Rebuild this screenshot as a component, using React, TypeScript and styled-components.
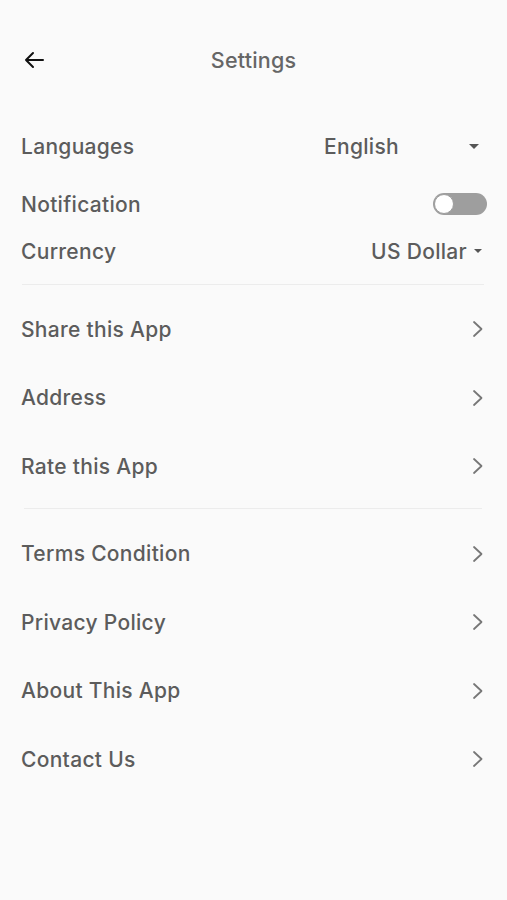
import React, { useState } from 'react';
import styled, { createGlobalStyle } from 'styled-components';

const GlobalStyle = createGlobalStyle`
  html, body {
    margin: 0;
    padding: 0;
    background: #fafafa;
  }
  body {
    font-family: Inter, "Noto Sans", "Liberation Sans", sans-serif;
    -webkit-font-smoothing: antialiased;
  }
`;

const Screen = styled.div`
  width: 507px;
  min-height: 900px;
  background: #fafafa;
  display: flex;
  flex-direction: column;
  color: #5c5c5c;
`;

const StatusBar = styled.div`
  height: 36px;
`;

const Header = styled.header`
  height: 48px;
  display: grid;
  grid-template-columns: 60px 1fr 60px;
  align-items: center;
`;

const BackButton = styled.button`
  border: none;
  background: none;
  padding: 0 0 0 22px;
  display: flex;
  align-items: center;
  cursor: pointer;
  color: #111;
`;

const Title = styled.h1`
  margin: 0;
  font-size: 21.5px;
  font-weight: 500;
  letter-spacing: 0.2px;
  text-align: center;
  color: #666;
`;

const Content = styled.main`
  padding: 34px 22px 0 21px;
  display: flex;
  flex-direction: column;
`;

const PrefRow = styled.div<{ $h: number }>`
  height: ${(p) => p.$h}px;
  display: flex;
  align-items: center;
  justify-content: space-between;
`;

const Label = styled.span`
  font-size: 21px;
  font-weight: 500;
  letter-spacing: 0.3px;
  color: #5c5c5c;
`;

const Select = styled.div<{ $w?: number; $gap?: number }>`
  ${(p) => (p.$w ? `width: ${p.$w}px;` : '')}
  display: flex;
  align-items: center;
  justify-content: space-between;
  gap: ${(p) => p.$gap ?? 0}px;
  font-size: 21px;
  font-weight: 500;
  letter-spacing: 0.3px;
  color: #5c5c5c;
`;

const Caret = styled.span`
  width: 0;
  height: 0;
  border-left: 5px solid transparent;
  border-right: 5px solid transparent;
  border-top: 5px solid #555;
  margin-right: 6px;
`;

const SmallCaret = styled(Caret)`
  border-left-width: 4px;
  border-right-width: 4px;
  border-top-width: 4px;
  margin-right: 3px;
`;

const Toggle = styled.button<{ $on: boolean }>`
  width: 54px;
  height: 22px;
  border-radius: 11px;
  border: none;
  padding: 0;
  margin-right: -2px;
  background: ${(p) => (p.$on ? '#4caf50' : '#9e9e9e')};
  position: relative;
  cursor: pointer;
  &::after {
    content: '';
    position: absolute;
    top: 1px;
    left: ${(p) => (p.$on ? '33px' : '1px')};
    width: 18px;
    height: 18px;
    border-radius: 50%;
    background: #fff;
    border: 1px solid #9e9e9e;
  }
`;

const Divider = styled.hr<{ $inset: number }>`
  border: none;
  border-top: 1px solid #ececec;
  margin: 0 ${(p) => p.$inset}px;
`;

const Spacer = styled.div<{ $h: number }>`
  height: ${(p) => p.$h}px;
`;

const NavRow = styled.div`
  height: 68.5px;
  display: flex;
  align-items: center;
  justify-content: space-between;
  cursor: pointer;
`;

const Chevron = () => (
  <svg width="14" height="20" viewBox="0 0 14 20" fill="none">
    <path d="M3 3 L10.5 10 L3 17" stroke="#777" strokeWidth="1.8" strokeLinecap="round" strokeLinejoin="round" />
  </svg>
);

const BackArrow = () => (
  <svg width="24" height="24" viewBox="0 0 24 24" fill="none">
    <path d="M21 12 H4 M11 5 L4 12 L11 19" stroke="#111" strokeWidth="2" strokeLinecap="round" strokeLinejoin="round" />
  </svg>
);

const groupOne = ['Share this App', 'Address', 'Rate this App'];
const groupTwo = ['Terms Condition', 'Privacy Policy', 'About This App', 'Contact Us'];

export default function App() {
  const [notify, setNotify] = useState(false);

  return (
    <>
      <GlobalStyle />
      <Screen>
        <StatusBar />
        <Header>
          <BackButton aria-label="Back">
            <BackArrow />
          </BackButton>
          <Title>Settings</Title>
          <span />
        </Header>
        <Content>
          <PrefRow $h={56}>
            <Label>Languages</Label>
            <Select $w={161}>
              English
              <Caret />
            </Select>
          </PrefRow>
          <PrefRow $h={60}>
            <Label>Notification</Label>
            <Toggle $on={notify} onClick={() => setNotify(!notify)} aria-label="Notification" />
          </PrefRow>
          <PrefRow $h={34}>
            <Label>Currency</Label>
            <Select $gap={7}>
              US Dollar
              <SmallCaret />
            </Select>
          </PrefRow>
          <Spacer $h={16} />
          <Divider $inset={1} />
          <Spacer $h={10} />
          {groupOne.map((t) => (
            <NavRow key={t}>
              <Label>{t}</Label>
              <Chevron />
            </NavRow>
          ))}
          <Spacer $h={7} />
          <Divider $inset={3} />
          <Spacer $h={11} />
          {groupTwo.map((t) => (
            <NavRow key={t}>
              <Label>{t}</Label>
              <Chevron />
            </NavRow>
          ))}
        </Content>
      </Screen>
    </>
  );
}
